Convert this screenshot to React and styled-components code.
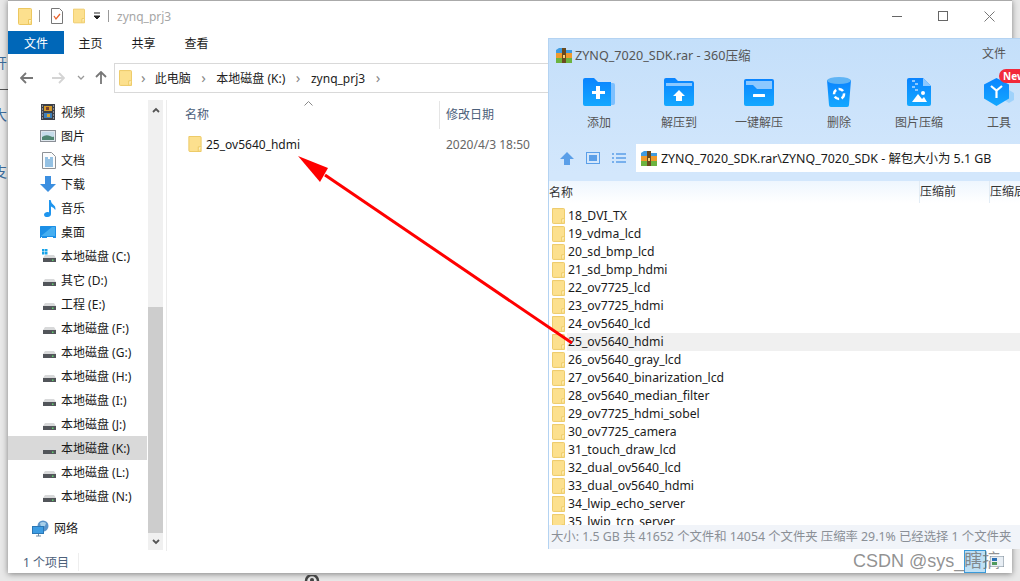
import React from "react";
import styled, { createGlobalStyle } from "styled-components";

const sans = `"Noto Sans", "Noto Sans CJK SC", sans-serif`;

const sideItems = [
    { name: "视频", icon: "video" },
    { name: "图片", icon: "picture" },
    { name: "文档", icon: "doc" },
    { name: "下载", icon: "download" },
    { name: "音乐", icon: "music" },
    { name: "桌面", icon: "desktop" },
    { name: "本地磁盘 (C:)", icon: "system" },
    { name: "其它 (D:)", icon: "drive" },
    { name: "工程 (E:)", icon: "drive" },
    { name: "本地磁盘 (F:)", icon: "drive" },
    { name: "本地磁盘 (G:)", icon: "drive" },
    { name: "本地磁盘 (H:)", icon: "drive" },
    { name: "本地磁盘 (I:)", icon: "drive" },
    { name: "本地磁盘 (J:)", icon: "drive" },
    { name: "本地磁盘 (K:)", icon: "drive", active: true },
    { name: "本地磁盘 (L:)", icon: "drive" },
    { name: "本地磁盘 (N:)", icon: "drive" },
];

const zipFolders = [
    "18_DVI_TX",
    "19_vdma_lcd",
    "20_sd_bmp_lcd",
    "21_sd_bmp_hdmi",
    "22_ov7725_lcd",
    "23_ov7725_hdmi",
    "24_ov5640_lcd",
    "25_ov5640_hdmi",
    "26_ov5640_gray_lcd",
    "27_ov5640_binarization_lcd",
    "28_ov5640_median_filter",
    "29_ov7725_hdmi_sobel",
    "30_ov7725_camera",
    "31_touch_draw_lcd",
    "32_dual_ov5640_lcd",
    "33_dual_ov5640_hdmi",
    "34_lwip_echo_server",
    "35_lwip_tcp_server",
];

const tools = [
    { name: "添加", icon: "add" },
    { name: "解压到", icon: "extract" },
    { name: "一键解压", icon: "oneKey" },
    { name: "删除", icon: "trash" },
    { name: "图片压缩", icon: "image" },
    { name: "工具", icon: "tool" },
];

function FolderIcon({ w = 14, h = 17 }) {
    return (
        <svg width={w} height={h} viewBox="0 0 14 17">
            <path d="M.5.5h12a1 1 0 0 1 1 1v15H1.5a1 1 0 0 1-1-1z" fill="#fce08e" stroke="#ecc760" />
            <path d="M10.5 16.5v-5h3" fill="#fff3c4" stroke="#ecc760" />
        </svg>
    );
}

function SideIcon({ type }) {
    if (type === "video") {
        return (
            <svg width="16" height="16" viewBox="0 0 16 16">
                <rect x="1" y="0" width="14" height="16" fill="#3c4048" />
                <rect x="4" y="2" width="8" height="5" fill="#d49a2a" />
                <rect x="4" y="9" width="8" height="5" fill="#3f7fb8" />
                <rect x="6" y="3" width="3" height="3" fill="#7a3f2a" />
                <rect x="7" y="10" width="3" height="3" fill="#d9a52c" />
                <path d="M2 2h1M2 5h1M2 8h1M2 11h1M2 14h1M13 2h1M13 5h1M13 8h1M13 11h1M13 14h1" stroke="#ddd" />
            </svg>
        );
    }
    if (type === "picture") {
        return (
            <svg width="16" height="14" viewBox="0 0 16 14">
                <rect x=".5" y="1.5" width="15" height="11" fill="#dfe7ee" stroke="#8a8f96" />
                <rect x="2" y="3" width="12" height="5" fill="#c5dcea" />
                <path d="M2 8q4-3 8-1t4 0v4H2z" fill="#4f8672" />
            </svg>
        );
    }
    if (type === "doc") {
        return (
            <svg width="14" height="17" viewBox="0 0 14 17">
                <path d="M.5.5h9l4 4v12H.5z" fill="#fbfcfd" stroke="#8e9297" />
                <path d="M3 6h3M8 6h3M3 8h8M3 10h8M3 12h8M3 14h8" stroke="#2f86c9" />
            </svg>
        );
    }
    if (type === "download") {
        return (
            <svg width="16" height="16" viewBox="0 0 16 16">
                <path d="M5 0h6v8h5l-8 8-8-8h5z" fill="#3c8fe0" />
            </svg>
        );
    }
    if (type === "music") {
        return (
            <svg width="12" height="17" viewBox="0 0 12 17">
                <path d="M5 0h1.6q.4 3 3 5t1.6 5q-1-2.500-4.200-3.500V14q0 2.500-3.300 3T0 15q0-2.500 3-3 1-.2 2 .2z" fill="#1e95ee" />
            </svg>
        );
    }
    if (type === "desktop") {
        return (
            <svg width="16" height="13" viewBox="0 0 16 13">
                <rect width="16" height="12" rx=".5" fill="#1b8fe6" />
                <path d="M1 10L12 1h3v9z" fill="#46aef0" />
                <path d="M1 11.500h1M7 11.500h6" stroke="#fff" />
            </svg>
        );
    }
    if (type === "network") {
        return (
            <svg width="17" height="17" viewBox="0 0 17 17">
                <circle cx="11" cy="6" r="5.500" fill="#5b94c9" />
                <path d="M8 3q3-2 6 0l-1 3-4 1z" fill="#a8d0ea" />
                <rect x=".5" y="6.500" width="11" height="7" fill="#3d9ce2" stroke="#2a77b5" />
                <path d="M4 16h5M6.500 14v2" stroke="#6e8ba3" />
            </svg>
        );
    }
    return (
        <svg width="14" height="14" viewBox="0 0 14 14">
            {type === "system" && (
                <path d="M0 0h2.500v2.500H0zM3 0h2.500v2.500H3zM0 3h2.500v2.500H0zM3 3h2.500v2.500H3z" fill="#16a3e8" />
            )}
            <path d="M1 9l2-3h9l2 3z" fill="#d8d9da" />
            <rect x="1" y="9" width="13" height="4" fill="#52555a" />
            <rect x="10" y="10.500" width="1.500" height="1.500" fill="#5ed06a" />
        </svg>
    );
}

function ToolIcon({ type }) {
    const grad = (
        <defs>
            <linearGradient id={"t" + type} x1="0" y1="0" x2="0" y2="1">
                <stop offset="0" stopColor="#0a84ff" />
                <stop offset="1" stopColor="#14a8ff" />
            </linearGradient>
        </defs>
    );
    const fill = `url(#t${type})`;
    if (type === "add") {
        return (
            <svg width="32" height="30" viewBox="0 0 32 30">
                {grad}
                <path d="M27 6h3a2 2 0 0 1 2 2v18a2 2 0 0 1-2 2h-3z" fill="#7cc0ff" />
                <path d="M2 1h9l4 4h13v24H2a2 2 0 0 1-2-2V3a2 2 0 0 1 2-2z" fill={fill} />
                <path d="M13 10h4v5h5v3h-5v5h-4v-5H9v-3h4z" fill="#fff" transform="translate(0 -1)" />
            </svg>
        );
    }
    if (type === "extract") {
        return (
            <svg width="30" height="30" viewBox="0 0 30 30">
                {grad}
                <path d="M2 1h9l3 3h14a2 2 0 0 1 2 2v21a2 2 0 0 1-2 2H2a2 2 0 0 1-2-2V3a2 2 0 0 1 2-2z" fill={fill} />
                <rect x="2" y="6" width="26" height="3" fill="#8cc8ff" />
                <path d="M15 13l6 6h-3v5h-6v-5H9z" fill="#fff" />
            </svg>
        );
    }
    if (type === "oneKey") {
        return (
            <svg width="30" height="30" viewBox="0 0 30 30">
                {grad}
                <rect y="2" width="30" height="27" rx="2" fill={fill} />
                <path d="M2 4h26v8H13l-4-4H2z" fill="#8cc8ff" />
                <rect x="9" y="17" width="12" height="3" rx=".5" fill="#fff" />
            </svg>
        );
    }
    if (type === "trash") {
        return (
            <svg width="24" height="30" viewBox="0 0 24 30">
                {grad}
                <path d="M0 3h24l-2 25a2 2 0 0 1-2 2H4a2 2 0 0 1-2-2z" fill={fill} />
                <ellipse cx="12" cy="3.500" rx="12" ry="3.500" fill="#5fb4f5" />
                <circle cx="12" cy="17" r="5" fill="none" stroke="#fff" strokeWidth="2.500" strokeDasharray="5 2.500" />
            </svg>
        );
    }
    if (type === "image") {
        return (
            <svg width="24" height="28" viewBox="0 0 24 28">
                {grad}
                <path d="M2 0h14l8 8v18a2 2 0 0 1-2 2H2a2 2 0 0 1-2-2V2a2 2 0 0 1 2-2z" fill={fill} />
                <path d="M16 0l8 8h-8z" fill="#8cc8ff" />
                <path d="M5 2h3v2H5zM8 5h3v2H8zM5 8h3v2H5zM8 11h3v2H8z" fill="#8cc8ff" />
                <circle cx="16" cy="15" r="2" fill="#fff" />
                <path d="M5 24l6-8 4 5 2-2 3 5z" fill="#fff" />
            </svg>
        );
    }
    return (
        <svg width="30" height="28" viewBox="0 0 30 28">
            {grad}
            <path d="M20 15l5-3 5 3v7l-5 3-5-3z" fill="#9fd2fb" />
            <path d="M12.500 0L25 6.500v14L12.500 28 0 20.500v-14z" fill={fill} />
            <path d="M7 8l5.500 4.500L18 8M12.500 12.500V20" fill="none" stroke="#fff" strokeWidth="2.200" />
        </svg>
    );
}

function App() {
    return (
        <Desktop>
            <GlobalStyle />
            <Behind>
                <BehindChar $top={53}>开</BehindChar>
                <BehindRule />
                <BehindChar $top={15}>大</BehindChar>
                <BehindChar $top={37}>支</BehindChar>
            </Behind>
            <Explorer>
                <TitleBar>
                    <FolderIcon />
                    <TitleSep />
                    <svg width="12" height="16" viewBox="0 0 12 16">
                        <path d="M.5.500h8l3 3v12H.5z" fill="#fff" stroke="#777" />
                        <path d="M3 8l2 3 4-5" fill="none" stroke="#e8622c" strokeWidth="1.300" />
                    </svg>
                    <FolderGap>
                        <FolderIcon w={12} h={16} />
                    </FolderGap>
                    <Caret>
                        <svg width="8" height="8" viewBox="0 0 8 8">
                            <path d="M1 1h6M1 4h6L4 7z" stroke="#222" fill="#222" />
                        </svg>
                    </Caret>
                    <TitleSep />
                    <TitleText>zynq_prj3</TitleText>
                    <WindowButtons>
                        <svg width="11" height="11" viewBox="0 0 11 11">
                            <path d="M0 5.500h10" stroke="#666" />
                        </svg>
                        <svg width="11" height="11" viewBox="0 0 11 11">
                            <rect x=".5" y=".5" width="9" height="9" fill="none" stroke="#666" />
                        </svg>
                        <svg width="11" height="11" viewBox="0 0 11 11">
                            <path d="M.5.500l10 10M10.500.500l-10 10" stroke="#777" />
                        </svg>
                    </WindowButtons>
                </TitleBar>
                <RibbonTabs>
                    <FileTab>文件</FileTab>
                    <RibbonTab>主页</RibbonTab>
                    <RibbonTab>共享</RibbonTab>
                    <RibbonTab>查看</RibbonTab>
                </RibbonTabs>
                <NavRow>
                    <NavButtons>
                        <NavIcon $left={12}>
                            <svg width="14" height="12" viewBox="0 0 14 12">
                                <path d="M6 1L1 6l5 5M1 6h12" fill="none" stroke="#777" strokeWidth="1.800" />
                            </svg>
                        </NavIcon>
                        <NavIcon $left={17}>
                            <svg width="14" height="12" viewBox="0 0 14 12">
                                <path d="M8 1l5 5-5 5M13 6H1" fill="none" stroke="#d4d4d4" strokeWidth="1.800" />
                            </svg>
                        </NavIcon>
                        <NavIcon $left={12}>
                            <svg width="8" height="6" viewBox="0 0 8 6">
                                <path d="M1 1l3 3 3-3" fill="none" stroke="#999" strokeWidth="1.300" />
                            </svg>
                        </NavIcon>
                        <NavIcon $left={10}>
                            <svg width="12" height="14" viewBox="0 0 12 14">
                                <path d="M1 6l5-5 5 5M6 1v12" fill="none" stroke="#777" strokeWidth="1.800" />
                            </svg>
                        </NavIcon>
                    </NavButtons>
                    <AddressBox>
                        <FolderIcon w={13} h={16} />
                        <Crumb $first>›</Crumb>
                        <span>此电脑</span>
                        <Crumb>›</Crumb>
                        <span>本地磁盘 (K:)</span>
                        <Crumb>›</Crumb>
                        <span>zynq_prj3</span>
                        <Crumb>›</Crumb>
                    </AddressBox>
                </NavRow>
                <Content>
                    <Sidebar>
                        <SideList>
                            {sideItems.map((item) => (
                                <SideRow key={item.name} $active={item.active}>
                                    <SideIconBox>
                                        <SideIcon type={item.icon} />
                                    </SideIconBox>
                                    {item.name}
                                </SideRow>
                            ))}
                            <NetworkRow>
                                <SideIcon type="network" />
                                网络
                            </NetworkRow>
                        </SideList>
                        <ScrollTrack>
                            <ScrollButton>
                                <svg width="8" height="6" viewBox="0 0 8 6">
                                    <path d="M1 5l3-3 3 3" fill="none" stroke="#555" strokeWidth="1.800" />
                                </svg>
                            </ScrollButton>
                            <ScrollSpace />
                            <ScrollThumb />
                            <ScrollButton $short>
                                <svg width="8" height="6" viewBox="0 0 8 6">
                                    <path d="M1 1l3 3 3-3" fill="none" stroke="#555" strokeWidth="1.800" />
                                </svg>
                            </ScrollButton>
                        </ScrollTrack>
                    </Sidebar>
                    <FileArea>
                        <SortCaret>
                            <svg width="9" height="5" viewBox="0 0 9 5">
                                <path d="M.5 4.500l4-4 4 4" fill="none" stroke="#888" />
                            </svg>
                        </SortCaret>
                        <FileHeader>
                            <NameColumn>名称</NameColumn>
                            <DateColumn>修改日期</DateColumn>
                        </FileHeader>
                        <FileRow>
                            <FileName>
                                <FolderIcon w={14} h={16} />
                                25_ov5640_hdmi
                            </FileName>
                            <FileDate>2020/4/3 18:50</FileDate>
                        </FileRow>
                    </FileArea>
                </Content>
                <StatusBar>
                    <StatusText>1 个项目</StatusText>
                </StatusBar>
            </Explorer>

            <ZipWindow>
                <ZipTitle>
                    <ArchiveIcon />
                    <ZipTitleText>ZYNQ_7020_SDK.rar - 360压缩</ZipTitleText>
                    <ZipFileMenu>文件</ZipFileMenu>
                </ZipTitle>
                <ZipToolbar>
                    {tools.map((tool) => (
                        <ZipTool key={tool.name}>
                            <ZipToolIcon>
                                <ToolIcon type={tool.icon} />
                                {tool.icon === "tool" && <NewBadge>New</NewBadge>}
                            </ZipToolIcon>
                            {tool.name}
                        </ZipTool>
                    ))}
                </ZipToolbar>
                <ZipPathRow>
                    <ZipPathButtons>
                        <svg width="14" height="13" viewBox="0 0 14 13">
                            <path d="M7 0l7 7h-4v6H4V7H0z" fill="#5b9fe8" />
                        </svg>
                        <svg width="14" height="12" viewBox="0 0 14 12">
                            <rect x=".5" y=".5" width="13" height="11" fill="#d5e7fb" stroke="#5b9fe8" />
                            <rect x="3" y="3" width="8" height="6" fill="#5b9fe8" />
                        </svg>
                        <svg width="14" height="10" viewBox="0 0 14 10">
                            <path d="M0 1h2M4 1h10M0 5h2M4 5h10M0 9h2M4 9h10" stroke="#5b9fe8" strokeWidth="1.600" />
                        </svg>
                    </ZipPathButtons>
                    <ZipPathBox>
                        <ArchiveIcon />
                        <span>ZYNQ_7020_SDK.rar\ZYNQ_7020_SDK - 解包大小为 5.1 GB</span>
                    </ZipPathBox>
                </ZipPathRow>
                <ZipHeader>
                    <ZipHeadName>名称</ZipHeadName>
                    <ZipHeadCol>压缩前</ZipHeadCol>
                    <ZipHeadCol>压缩后</ZipHeadCol>
                </ZipHeader>
                <ZipList>
                    {zipFolders.map((name) => (
                        <ZipRow key={name}>
                            <FolderIcon w={13} h={18} />
                            <ZipRowName $active={name === "25_ov5640_hdmi"}>{name}</ZipRowName>
                        </ZipRow>
                    ))}
                </ZipList>
                <ZipStatus>大小: 1.5 GB 共 41652 个文件和 14054 个文件夹 压缩率 29.1% 已经选择 1 个文件夹</ZipStatus>
            </ZipWindow>

            <ArrowLayer width="1020" height="581" viewBox="0 0 1020 581">
                <path d="M572 343L325 175" stroke="#f00" strokeWidth="3" />
                <path d="M298 156L328 168 320 182z" fill="#f00" />
            </ArrowLayer>

            <Watermark>
                <WatermarkBox />
                <WatermarkText>CSDN @sys_瞎搞</WatermarkText>
                <WatermarkIcon>
                    <svg width="14" height="11" viewBox="0 0 14 11">
                        <rect width="14" height="11" fill="#e8eef4" stroke="#7b8894" />
                        <rect x="2" y="2" width="5" height="3" fill="#2a6fb5" />
                        <rect x="2" y="6" width="5" height="3" fill="#4f9a5e" />
                    </svg>
                </WatermarkIcon>
            </Watermark>
            <CursorGlyph>
                <svg width="16" height="6" viewBox="0 0 16 6">
                    <path d="M2 6a6 6 0 0 1 12 0" fill="none" stroke="#444" strokeWidth="2.500" />
                    <circle cx="8" cy="5" r="2" fill="#444" />
                </svg>
            </CursorGlyph>
        </Desktop>
    );
}

function ArchiveIcon() {
    return (
        <svg width="16" height="16" viewBox="0 0 16 16">
            <path d="M0 3l3-2h3l1 2h9v3H0z" fill="#3f9be0" />
            <rect y="6" width="16" height="5" fill="#ef9a2d" />
            <rect y="11" width="16" height="5" fill="#6cb33f" />
            <rect x="6" y="1" width="4" height="15" fill="#6b4a1e" />
            <rect x="7" y="8" width="2" height="3" fill="#f4d27a" />
        </svg>
    );
}

const GlobalStyle = createGlobalStyle`
    html, body {
        margin: 0;
        padding: 0;
        background: #e6e6e6;
    }
    * {
        box-sizing: border-box;
    }
`;

const Desktop = styled.div`
    position: relative;
    display: flex;
    align-items: flex-start;
    width: 1020px;
    height: 581px;
    overflow: hidden;
    background: #e8e8e8;
    font-family: ${sans};
    font-size: 12px;
    color: #1a1a1a;
`;

const Behind = styled.div`
    width: 8px;
    height: 581px;
    flex-shrink: 0;
    overflow: hidden;
    color: #3c6c9c;
    font-size: 14px;
    line-height: 20px;
`;

const BehindChar = styled.div`
    margin-top: ${(p) => p.$top}px;
    margin-left: -7px;
`;

const BehindRule = styled.div`
    height: 1px;
    margin-top: 16px;
    background: #555;
`;

const Explorer = styled.div`
    width: 1004px;
    height: 573px;
    flex-shrink: 0;
    display: flex;
    flex-direction: column;
    background: #fff;
    border-top: 1px solid #aaa;
    box-shadow: 0 1px 6px rgba(0, 0, 0, 0.45);
`;

const TitleBar = styled.div`
    height: 30px;
    display: flex;
    align-items: center;
    padding-left: 10px;
    flex-shrink: 0;
`;

const TitleSep = styled.div`
    width: 1px;
    height: 12px;
    margin: 0 11px 0 7px;
    background: #999;
`;

const FolderGap = styled.div`
    display: flex;
    margin-left: 10px;
`;

const Caret = styled.div`
    display: flex;
    margin-left: 8px;
`;

const TitleText = styled.div`
    color: #a6a6a6;
    margin-left: -3px;
`;

const WindowButtons = styled.div`
    display: flex;
    gap: 35px;
    margin-left: auto;
    padding-right: 17px;
`;

const RibbonTabs = styled.div`
    display: flex;
    height: 23px;
    flex-shrink: 0;
`;

const FileTab = styled.div`
    width: 56px;
    background: #0067b8;
    color: #fff;
    text-align: center;
    line-height: 25px;
`;

const RibbonTab = styled.div`
    width: 53px;
    text-align: center;
    line-height: 25px;
`;

const NavRow = styled.div`
    display: flex;
    align-items: center;
    height: 46px;
    padding-top: 2px;
    flex-shrink: 0;
`;

const NavButtons = styled.div`
    display: flex;
    align-items: center;
    width: 106px;
`;

const NavIcon = styled.div`
    display: flex;
    margin-left: ${(p) => p.$left}px;
`;

const AddressBox = styled.div`
    flex: 1;
    height: 30px;
    display: flex;
    align-items: center;
    gap: 8px;
    padding-left: 4px;
    border: 1px solid #d9d9d9;
    color: #222;
`;

const Crumb = styled.span`
    color: #888;
    font-size: 15px;
    line-height: 1;
    margin: 0 ${(p) => (p.$first ? 1 : 2.5)}px 2px;
`;

const Content = styled.div`
    flex: 1;
    display: flex;
    min-height: 0;
`;

const Sidebar = styled.div`
    width: 159px;
    display: flex;
    border-right: 1px solid #ececec;
    margin-bottom: 0;
`;

const SideList = styled.div`
    width: 139px;
    flex-shrink: 0;
`;

const SideRow = styled.div`
    height: 24px;
    display: flex;
    align-items: center;
    background: ${(p) => (p.$active ? "#d9d9d9" : "transparent")};
`;

const SideIconBox = styled.div`
    width: 53px;
    display: flex;
    justify-content: flex-end;
    align-items: center;
    padding-right: 5px;
`;

const NetworkRow = styled.div`
    height: 24px;
    margin-top: 8px;
    display: flex;
    align-items: center;
    gap: 5px;
    padding-left: 24px;
`;

const ScrollTrack = styled.div`
    width: 15px;
    margin-left: 1px;
    height: 450px;
    display: flex;
    flex-direction: column;
    background: #f0f0f0;
`;

const ScrollButton = styled.div`
    height: ${(p) => (p.$short ? 17 : 20)}px;
    display: flex;
    align-items: center;
    justify-content: center;
`;

const ScrollSpace = styled.div`
    height: 187px;
`;

const ScrollThumb = styled.div`
    height: 226px;
    background: #cdcdcd;
`;

const FileArea = styled.div`
    position: relative;
    flex: 1;
    min-width: 0;
`;

const SortCaret = styled.div`
    position: absolute;
    left: 137px;
    top: 1px;
    display: flex;
`;

const FileHeader = styled.div`
    display: flex;
    height: 28px;
    color: #4c607a;
    align-items: center;
    margin-top: 1px;
`;

const NameColumn = styled.div`
    width: 273px;
    height: 100%;
    padding-left: 18px;
    line-height: 28px;
    border-right: 1px solid #e5e5e5;
`;

const DateColumn = styled.div`
    padding-left: 6px;
    line-height: 28px;
`;

const FileRow = styled.div`
    display: flex;
    align-items: center;
    height: 22px;
    margin-top: 4px;
`;

const FileName = styled.div`
    width: 279px;
    display: flex;
    align-items: center;
    gap: 4px;
    padding-left: 21px;
    color: #1a1a1a;
`;

const FileDate = styled.div`
    color: #666;
`;

const StatusBar = styled.div`
    height: 22px;
    flex-shrink: 0;
    display: flex;
    align-items: center;
    padding-left: 15px;
`;

const StatusText = styled.div`
    width: 56px;
    color: #4c607a;
    border-right: 1px solid #eee;
`;

const ZipWindow = styled.div`
    position: absolute;
    left: 548px;
    top: 38px;
    width: 472px;
    height: 511px;
    display: flex;
    flex-direction: column;
    background: linear-gradient(#c4dffa, #d3e7fc 135px);
    border-top: 1px solid #b4d3f2;
    border-left: 1px solid #b4d3f2;
`;

const ZipTitle = styled.div`
    height: 31px;
    display: flex;
    align-items: center;
    gap: 3px;
    padding-left: 7px;
    flex-shrink: 0;
`;

const ZipTitleText = styled.div`
    color: #555;
    font-size: 12.600px;
`;

const ZipFileMenu = styled.div`
    margin-left: auto;
    padding-right: 14px;
    color: #555;
    font-size: 12px;
    margin-bottom: 4px;
`;

const ZipToolbar = styled.div`
    display: flex;
    height: 65px;
    padding-left: 10px;
    flex-shrink: 0;
`;

const ZipTool = styled.div`
    width: 80px;
    flex-shrink: 0;
    display: flex;
    flex-direction: column;
    align-items: center;
    color: #555;
    font-size: 12px;
`;

const ZipToolIcon = styled.div`
    position: relative;
    height: 30px;
    margin-top: 7px;
    margin-bottom: 6px;
    display: flex;
    align-items: center;
    justify-content: center;
`;

const NewBadge = styled.div`
    position: absolute;
    left: 15px;
    top: -8px;
    width: 30px;
    height: 14px;
    border-radius: 7px;
    background: #f2293a;
    color: #fff;
    font-size: 10px;
    font-weight: 700;
    line-height: 14px;
    padding-left: 4px;
`;

const ZipPathRow = styled.div`
    height: 46px;
    display: flex;
    align-items: center;
    flex-shrink: 0;
    padding-bottom: 9px;
    padding-top: 9px;
`;

const ZipPathButtons = styled.div`
    width: 87px;
    display: flex;
    align-items: center;
    gap: 12px;
    padding-left: 11px;
`;

const ZipPathBox = styled.div`
    flex: 1;
    height: 28px;
    display: flex;
    align-items: center;
    gap: 4px;
    padding-left: 5px;
    background: #fff;
    color: #1a1a1a;
    font-size: 12.400px;
    white-space: nowrap;
    overflow: hidden;
`;

const ZipHeader = styled.div`
    height: 22px;
    display: flex;
    flex-shrink: 0;
    align-items: center;
    background: linear-gradient(#eef6fe, #fff);
    color: #333;
`;

const ZipHeadName = styled.div`
    width: 370px;
    flex-shrink: 0;
`;

const ZipHeadCol = styled.div`
    width: 70px;
    flex-shrink: 0;
    height: 100%;
    line-height: 22px;
    border-left: 1px solid #e2ecf5;
`;

const ZipList = styled.div`
    flex: 1;
    min-height: 0;
    overflow: hidden;
    background: #fff;
    padding-top: 4px;
`;

const ZipRow = styled.div`
    height: 18px;
    display: flex;
    align-items: center;
    padding-left: 3px;
    white-space: nowrap;
`;

const ZipRowName = styled.div`
    flex: 1;
    height: 18px;
    line-height: 18px;
    margin-left: 2px;
    padding-left: 1px;
    font-size: 12.200px;
    background: ${(p) => (p.$active ? "#f0f0f0" : "transparent")};
    color: #1a1a1a;
`;

const ZipStatus = styled.div`
    height: 24px;
    flex-shrink: 0;
    line-height: 24px;
    padding-left: 2px;
    font-size: 12.350px;
    background: #f1f4f9;
    color: #8a8f96;
    white-space: nowrap;
    overflow: hidden;
`;

const ArrowLayer = styled.svg`
    position: absolute;
    left: 0;
    top: 0;
    pointer-events: none;
`;

const Watermark = styled.div`
    position: absolute;
    left: 853px;
    top: 550px;
    width: 160px;
    height: 23px;
`;

const WatermarkBox = styled.div`
    position: absolute;
    left: 111px;
    top: 0;
    width: 22px;
    height: 23px;
    background: #bfe0f5;
    border: 1px solid #3a9ad9;
`;

const WatermarkText = styled.div`
    position: absolute;
    left: 0;
    top: 0;
    color: rgba(110, 110, 110, 0.75);
    font-family: "Liberation Sans", "Noto Sans CJK SC", sans-serif;
    font-size: 18px;
    line-height: 23px;
    white-space: nowrap;
`;

const WatermarkIcon = styled.div`
    position: absolute;
    left: 137px;
    top: 6px;
    display: flex;
`;

const CursorGlyph = styled.div`
    position: absolute;
    left: 304px;
    top: 575px;
    display: flex;
`;

export default App;
